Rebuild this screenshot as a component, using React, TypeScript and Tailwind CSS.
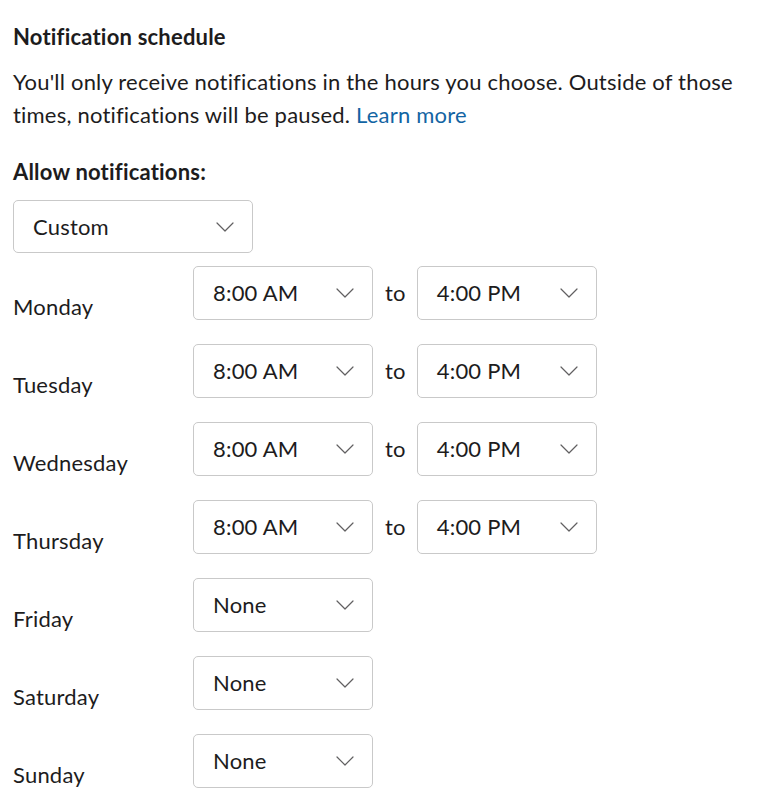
import React from 'react'

interface DayRow {
  day: string
  from: string
  to?: string
}

const rows: DayRow[] = [
  { day: 'Monday', from: '8:00 AM', to: '4:00 PM' },
  { day: 'Tuesday', from: '8:00 AM', to: '4:00 PM' },
  { day: 'Wednesday', from: '8:00 AM', to: '4:00 PM' },
  { day: 'Thursday', from: '8:00 AM', to: '4:00 PM' },
  { day: 'Friday', from: 'None' },
  { day: 'Saturday', from: 'None' },
  { day: 'Sunday', from: 'None' },
]

function Chevron() {
  return (
    <svg width="18" height="10" viewBox="0 0 18 10" fill="none" className="shrink-0">
      <path d="M1 1l8 8 8-8" stroke="#616061" strokeWidth="1.2" strokeLinecap="round" strokeLinejoin="round" />
    </svg>
  )
}

function Select({ value, className }: { value: string; className: string }) {
  return (
    <div
      className={`flex items-center justify-between pl-[19px] pr-[18px] border border-[#c9c9c9] rounded-[5px] bg-white ${className}`}
    >
      <span className="text-[22px] leading-[28px] text-[#1d1c1d]">{value}</span>
      <Chevron />
    </div>
  )
}

export default function App() {
  return (
    <div
      className="px-[13px] pt-[20px] pb-4 text-[#1d1c1d] bg-white tracking-[0.2px]"
      style={{ fontFamily: 'Lato, "Noto Sans", sans-serif' }}
    >
      <h2 className="text-[22px] leading-[33px] font-bold">Notification schedule</h2>

      <p className="mt-[12px] text-[22px] leading-[33px] text-[#1d1c1d]">
        You'll only receive notifications in the hours you choose. Outside of those times,
        notifications will be paused. <span className="text-[#1264a3]">Learn more</span>
      </p>

      <h3 className="mt-[24px] text-[22px] leading-[33px] font-bold">Allow notifications:</h3>

      <Select value="Custom" className="mt-[12px] w-[240px] h-[53px]" />

      {/* Day rows */}
      <div className="mt-[13px] flex flex-col gap-[24px]">
        {rows.map((row) => (
          <div key={row.day} className="flex items-start h-[54px]">
            <div className="w-[180px] pt-[28px] text-[22px] leading-[26px]">{row.day}</div>
            <Select value={row.from} className="w-[180px] h-[54px]" />
            {row.to && (
              <>
                <span className="pl-[12px] pr-[11px] self-center text-[22px] leading-[28px]">to</span>
                <Select value={row.to} className="w-[180px] h-[54px]" />
              </>
            )}
          </div>
        ))}
      </div>
    </div>
  )
}
